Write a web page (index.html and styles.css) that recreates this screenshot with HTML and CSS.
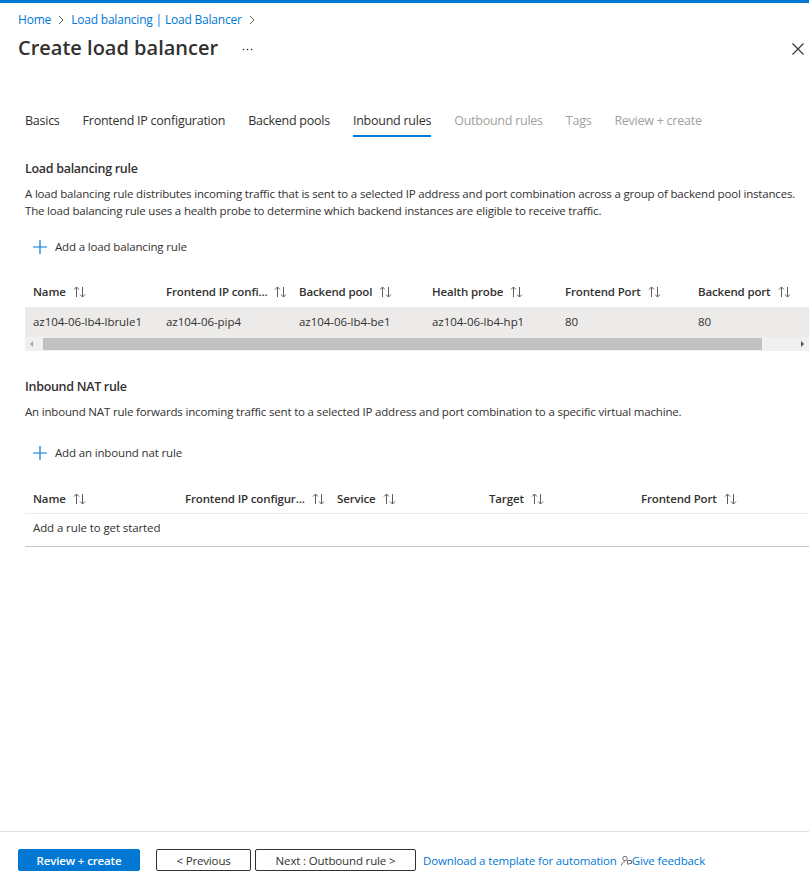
FILE: index.html
```html
<!DOCTYPE html>
<html lang="en">
<head>
<meta charset="utf-8">
<title>Create load balancer</title>
<link rel="stylesheet" href="styles.css">
</head>
<body>
<div class="topbar"></div>
<main class="page">
  <nav class="crumbs">
    <a href="#">Home</a>
    <svg class="chev" width="8" height="10" viewBox="0 0 8 10"><path d="M2 1l4 4-4 4" fill="none" stroke="#605e5c" stroke-width="1"/></svg>
    <a href="#">Load balancing | Load Balancer</a>
    <svg class="chev" width="8" height="10" viewBox="0 0 8 10"><path d="M2 1l4 4-4 4" fill="none" stroke="#605e5c" stroke-width="1"/></svg>
  </nav>
  <header class="title-row">
    <h1>Create load balancer</h1>
    <svg class="more" width="11" height="3" viewBox="0 0 11 3"><circle cx="1.5" cy="1.5" r="0.8" fill="#323130"/><circle cx="5.5" cy="1.5" r="0.8" fill="#323130"/><circle cx="9.5" cy="1.5" r="0.8" fill="#323130"/></svg>
    <span class="spacer"></span>
    <svg class="close" width="12" height="12" viewBox="0 0 12 12"><path d="M0.5 0.5l11 11M11.5 0.5l-11 11" stroke="#323130" stroke-width="1.1"/></svg>
  </header>

  <div class="tabs">
    <span class="tab">Basics</span>
    <span class="tab">Frontend IP configuration</span>
    <span class="tab">Backend pools</span>
    <span class="tab active">Inbound rules</span>
    <span class="tab off">Outbound rules</span>
    <span class="tab off">Tags</span>
    <span class="tab off">Review + create</span>
  </div>

  <section class="section">
    <h2>Load balancing rule</h2>
    <p class="desc">A load balancing rule distributes incoming traffic that is sent to a selected IP address and port combination across a group of backend pool instances.<br>The load balancing rule uses a health probe to determine which backend instances are eligible to receive traffic.</p>
    <div class="add">
      <svg width="14" height="14" viewBox="0 0 14 14"><path d="M7 0v14M0 7h14" stroke="#0078d4" stroke-width="1.2"/></svg>
      <span>Add a load balancing rule</span>
    </div>
    <div class="grid-wrap">
      <div class="grid cols6">
        <div class="hcell">Name <svg class="sort" width="13" height="12" viewBox="0 0 13 12"><path d="M3.5 11V1M1 3.5l2.5-2.5 2.5 2.5M9.5 1v10M7 8.5l2.5 2.5 2.5-2.5" fill="none" stroke="#605e5c" stroke-width="1"/></svg></div>
        <div class="hcell">Frontend IP confi... <svg class="sort" width="13" height="12" viewBox="0 0 13 12"><path d="M3.5 11V1M1 3.5l2.5-2.5 2.5 2.5M9.5 1v10M7 8.5l2.5 2.5 2.5-2.5" fill="none" stroke="#605e5c" stroke-width="1"/></svg></div>
        <div class="hcell">Backend pool <svg class="sort" width="13" height="12" viewBox="0 0 13 12"><path d="M3.5 11V1M1 3.5l2.5-2.5 2.5 2.5M9.5 1v10M7 8.5l2.5 2.5 2.5-2.5" fill="none" stroke="#605e5c" stroke-width="1"/></svg></div>
        <div class="hcell">Health probe <svg class="sort" width="13" height="12" viewBox="0 0 13 12"><path d="M3.5 11V1M1 3.5l2.5-2.5 2.5 2.5M9.5 1v10M7 8.5l2.5 2.5 2.5-2.5" fill="none" stroke="#605e5c" stroke-width="1"/></svg></div>
        <div class="hcell">Frontend Port <svg class="sort" width="13" height="12" viewBox="0 0 13 12"><path d="M3.5 11V1M1 3.5l2.5-2.5 2.5 2.5M9.5 1v10M7 8.5l2.5 2.5 2.5-2.5" fill="none" stroke="#605e5c" stroke-width="1"/></svg></div>
        <div class="hcell">Backend port <svg class="sort" width="13" height="12" viewBox="0 0 13 12"><path d="M3.5 11V1M1 3.5l2.5-2.5 2.5 2.5M9.5 1v10M7 8.5l2.5 2.5 2.5-2.5" fill="none" stroke="#605e5c" stroke-width="1"/></svg></div>
      </div>
      <div class="grid cols6 row sel">
        <div class="cell">az104-06-lb4-lbrule1</div>
        <div class="cell">az104-06-pip4</div>
        <div class="cell">az104-06-lb4-be1</div>
        <div class="cell">az104-06-lb4-hp1</div>
        <div class="cell">80</div>
        <div class="cell">80</div>
      </div>
      <div class="hscroll">
        <svg width="11" height="14" viewBox="0 0 11 14"><path d="M7 4v6L4 7z" fill="#a3a3a3"/></svg>
        <div class="thumb"></div>
        <span class="track"></span>
        <svg width="11" height="14" viewBox="0 0 11 14"><path d="M4 4v6l3-3z" fill="#505050"/></svg>
      </div>
    </div>
  </section>

  <section class="section nat">
    <h2>Inbound NAT rule</h2>
    <p class="desc">An inbound NAT rule forwards incoming traffic sent to a selected IP address and port combination to a specific virtual machine.</p>
    <div class="add">
      <svg width="14" height="14" viewBox="0 0 14 14"><path d="M7 0v14M0 7h14" stroke="#0078d4" stroke-width="1.2"/></svg>
      <span>Add an inbound nat rule</span>
    </div>
    <div class="grid cols5 head2">
      <div class="hcell">Name <svg class="sort" width="13" height="12" viewBox="0 0 13 12"><path d="M3.5 11V1M1 3.5l2.5-2.5 2.5 2.5M9.5 1v10M7 8.5l2.5 2.5 2.5-2.5" fill="none" stroke="#605e5c" stroke-width="1"/></svg></div>
      <div class="hcell">Frontend IP configur... <svg class="sort" width="13" height="12" viewBox="0 0 13 12"><path d="M3.5 11V1M1 3.5l2.5-2.5 2.5 2.5M9.5 1v10M7 8.5l2.5 2.5 2.5-2.5" fill="none" stroke="#605e5c" stroke-width="1"/></svg></div>
      <div class="hcell">Service <svg class="sort" width="13" height="12" viewBox="0 0 13 12"><path d="M3.5 11V1M1 3.5l2.5-2.5 2.5 2.5M9.5 1v10M7 8.5l2.5 2.5 2.5-2.5" fill="none" stroke="#605e5c" stroke-width="1"/></svg></div>
      <div class="hcell">Target <svg class="sort" width="13" height="12" viewBox="0 0 13 12"><path d="M3.5 11V1M1 3.5l2.5-2.5 2.5 2.5M9.5 1v10M7 8.5l2.5 2.5 2.5-2.5" fill="none" stroke="#605e5c" stroke-width="1"/></svg></div>
      <div class="hcell">Frontend Port <svg class="sort" width="13" height="12" viewBox="0 0 13 12"><path d="M3.5 11V1M1 3.5l2.5-2.5 2.5 2.5M9.5 1v10M7 8.5l2.5 2.5 2.5-2.5" fill="none" stroke="#605e5c" stroke-width="1"/></svg></div>
    </div>
    <div class="empty">Add a rule to get started</div>
  </section>
</main>

<footer class="footer">
  <button class="btn primary">Review + create</button>
  <button class="btn secondary prev">&lt; Previous</button>
  <button class="btn secondary next">Next : Outbound rule &gt;</button>
  <a class="link" href="#">Download a template for automation</a>
  <a class="link feedback" href="#"><svg width="11" height="11" viewBox="0 0 11 11"><circle cx="4" cy="3.5" r="2.2" fill="none" stroke="#605e5c" stroke-width="0.9"/><path d="M0.5 10.5c0-2.2 1.6-3.6 3.5-3.6" fill="none" stroke="#605e5c" stroke-width="0.9"/><path d="M6.5 5.5h4v3h-2l-1.2 1.2v-1.2h-0.8z" fill="none" stroke="#605e5c" stroke-width="0.9"/></svg>Give feedback</a>
</footer>
</body>
</html>
```

FILE: styles.css
```css
* { box-sizing: border-box; }
html, body { margin: 0; padding: 0; }
body {
  width: 809px;
  height: 888px;
  display: flex;
  flex-direction: column;
  font-family: "Segoe UI", "Open Sans", sans-serif;
  color: #323130;
  background: #fff;
  overflow: hidden;
}
a { color: #0078d4; text-decoration: none; }

.topbar { height: 3px; background: #0078d4; flex: none; }

.page { flex: 1; padding: 0 0 0 18px; }

.crumbs {
  display: flex;
  align-items: center;
  gap: 5px;
  font-size: 12px;
  letter-spacing: -0.2px;
  line-height: 18px;
  margin-top: 8px;
}
.crumbs .chev { margin: 0 1px; }

.title-row {
  display: flex;
  align-items: center;
  height: 28px;
  margin-top: 5px;
  padding-right: 5px;
}
.title-row h1 {
  margin: 0;
  font-size: 20px;
  font-weight: 600;
  line-height: 28px;
}
.more { margin-left: 24px; margin-top: 3px; }
.spacer { flex: 1; }
.close { margin-top: 2px; }

.tabs {
  display: flex;
  gap: 23px;
  margin-top: 49px;
  padding-left: 7px;
  font-size: 12.5px;
  letter-spacing: -0.25px;
}
.tab { line-height: 20px; padding-bottom: 4px; border-bottom: 2px solid transparent; }
.tab.active { border-bottom-color: #0078d4; }
.tab.off { color: #a19f9d; }

.section { padding-left: 7px; }
.section h2 {
  margin: 22px 0 0;
  font-size: 12.5px;
  letter-spacing: -0.3px;
  font-weight: 600;
  line-height: 20px;
}
.desc {
  margin: 6px 0 0;
  font-size: 11.5px;
  letter-spacing: -0.18px;
  line-height: 17px;
  padding-right: 0;
  white-space: nowrap;
}
.add {
  display: flex;
  align-items: center;
  gap: 8px;
  margin-top: 19px;
  padding-left: 8px;
  font-size: 11.5px;
  letter-spacing: -0.15px;
  line-height: 18px;
}

.grid-wrap { margin-top: 21px; }
.grid { display: grid; }
.cols6 { grid-template-columns: repeat(6, 133px); }
.cols5 { grid-template-columns: repeat(5, 152px); }
.hcell {
  font-size: 11.5px;
  letter-spacing: -0.15px;
  font-weight: 600;
  line-height: 30px;
  padding-left: 8px;
  white-space: nowrap;
  display: flex;
  align-items: center;
  gap: 7px;
}
.sort { flex: none; }
.row { height: 30px; }
.row.sel { background: #edebe9; }
.cell { font-size: 11.5px; letter-spacing: -0.05px; line-height: 30px; padding-left: 8px; white-space: nowrap; }

.hscroll {
  display: flex;
  align-items: center;
  height: 14px;
  background: #f0f0f0;
  padding: 0 1px;
}
.hscroll .thumb { width: 719px; height: 12px; background: #c1c1c1; margin-left: 6px; }
.hscroll .track { flex: 1; }

.nat h2 { margin-top: 26px; }
.nat .add { margin-top: 24px; }
.head2 { margin-top: 22px; border-bottom: 1px solid #edebe9; }
.head2 .hcell { line-height: 29px; }
.empty {
  font-size: 11.5px;
  letter-spacing: -0.1px;
  line-height: 18px;
  padding: 5px 0 9px 8px;
  border-bottom: 1px solid #c8c6c4;
}

.footer {
  flex: none;
  height: 57px;
  border-top: 1px solid #e1dfdd;
  display: flex;
  align-items: center;
  padding: 0 0 0 18px;
}
.btn {
  font-family: inherit;
  font-size: 11.5px;
  letter-spacing: -0.15px;
  height: 22px;
  padding: 0 6px;
  border-radius: 2px;
  cursor: pointer;
}
.primary {
  width: 122px;
  background: #0078d4;
  border: 1px solid #0078d4;
  color: #fff;
  font-weight: 600;
}
.secondary { background: #fff; border: 1px solid #323130; color: #323130; }
.prev { width: 95px; margin-left: 16px; }
.next { width: 161px; margin-left: 4px; }
.link { font-size: 11.5px; letter-spacing: -0.15px; margin-left: 7px; }
.feedback { display: flex; align-items: center; margin-left: 4px; gap: 0; }
```
